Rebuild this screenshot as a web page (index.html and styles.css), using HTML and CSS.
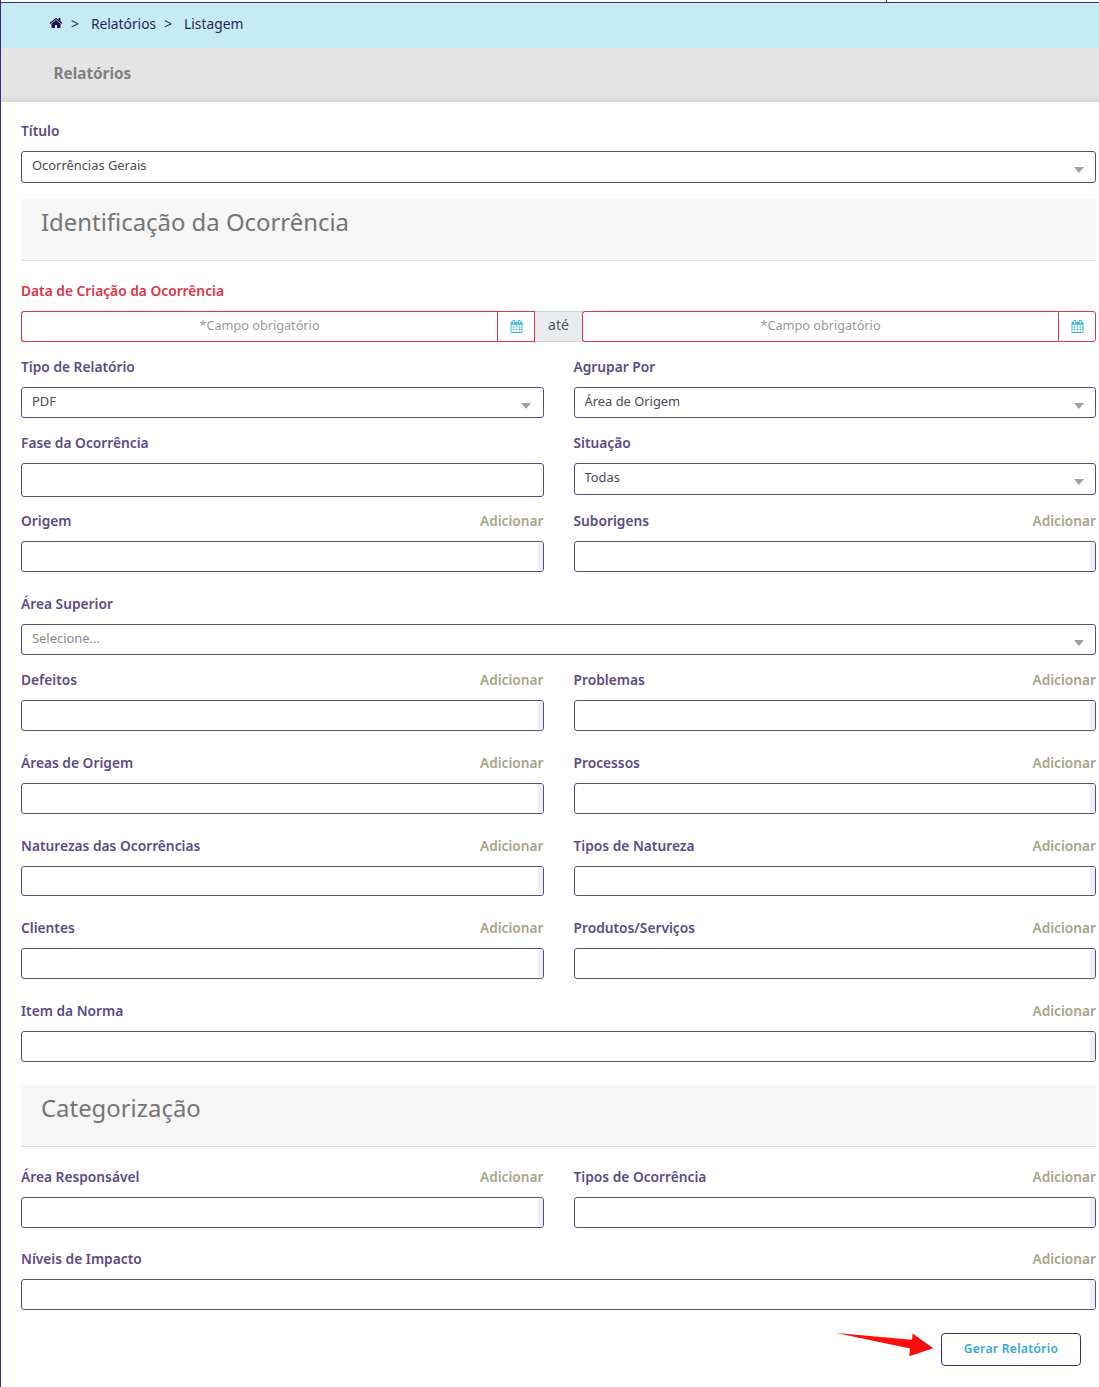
FILE: index.html
```html
<!DOCTYPE html>
<html lang="pt-BR">
<head>
    <meta charset="UTF-8">
    <meta name="viewport" content="width=device-width, initial-scale=1.0">
    <title>Relatórios</title>
    <link rel="stylesheet" href="styles.css">
</head>
<body>
    <div class="page">
        <div class="topbar"><span class="topbar-tick"></span></div>
        <div class="breadcrumb">
            <svg class="home-icon" viewBox="0 0 1792 1792"><path d="M1472 992v480q0 26-19 45t-45 19h-384v-384h-256v384h-384q-26 0-45-19t-19-45v-480q0-1 .5-3t.5-3l575-474 575 474q1 2 1 6zm223-69l-62 74q-8 9-21 11h-3q-13 0-21-7l-692-577-692 577q-12 8-24 7-13-2-21-11l-62-74q-8-10-7-23.500t11-21.500l719-599q32-26 76-26t76 26l244 204v-195q0-14 9-23t23-9h192q14 0 23 9t9 23v408l219 182q10 8 11 21.500t-7 23.500z"/></svg>
            <span class="crumb-sep">&gt;</span>
            <span>Relatórios</span>
            <span class="crumb-sep">&gt;</span>
            <span>Listagem</span>
        </div>
        <div class="page-title">Relatórios</div>

        <form class="content">
            <div class="row">
                <div class="field">
                    <label class="field-label">Título</label>
                    <div class="select-box h32"><select><option>Ocorrências Gerais</option></select></div>
                </div>
            </div>

            <div class="section first"><h3>Identificação da Ocorrência</h3></div>

            <div class="row">
                <div class="field">
                    <label class="field-label required">Data de Criação da Ocorrência</label>
                    <div class="date-range">
                        <input type="text" placeholder="*Campo obrigatório">
                        <span class="date-addon"><svg class="cal-icon" viewBox="0 0 1792 1792"><path d="M192 1664h288v-288h-288v288zm352 0h320v-288h-320v288zm-352-352h288v-320h-288v320zm352 0h320v-320h-320v320zm-352-384h288v-288h-288v288zm736 736h320v-288h-320v288zm-384-736h320v-288h-320v288zm768 736h288v-288h-288v288zm-384-352h320v-320h-320v320zm-352-864v-288q0-13-9.500-22.500t-22.500-9.500h-64q-13 0-22.500 9.500t-9.500 22.500v288q0 13 9.500 22.500t22.500 9.500h64q13 0 22.500-9.500t9.500-22.500zm736 864h288v-320h-288v320zm-384-384h320v-288h-320v288zm384 0h288v-288h-288v288zm32-480v-288q0-13-9.500-22.500t-22.500-9.500h-64q-13 0-22.500 9.500t-9.500 22.500v288q0 13 9.500 22.500t22.500 9.500h64q13 0 22.500-9.500t9.500-22.500zm384-64v1280q0 52-38 90t-90 38h-1408q-52 0-90-38t-38-90v-1280q0-52 38-90t90-38h128v-96q0-66 47-113t113-47h64q66 0 113 47t47 113v96h384v-96q0-66 47-113t113-47h64q66 0 113 47t47 113v96h128q52 0 90 38t38 90z"/></svg></span>
                        <span class="date-sep">até</span>
                        <input type="text" placeholder="*Campo obrigatório">
                        <span class="date-addon"><svg class="cal-icon" viewBox="0 0 1792 1792"><path d="M192 1664h288v-288h-288v288zm352 0h320v-288h-320v288zm-352-352h288v-320h-288v320zm352 0h320v-320h-320v320zm-352-384h288v-288h-288v288zm736 736h320v-288h-320v288zm-384-736h320v-288h-320v288zm768 736h288v-288h-288v288zm-384-352h320v-320h-320v320zm-352-864v-288q0-13-9.500-22.500t-22.500-9.500h-64q-13 0-22.500 9.500t-9.500 22.500v288q0 13 9.500 22.500t22.500 9.500h64q13 0 22.500-9.500t9.500-22.500zm736 864h288v-320h-288v320zm-384-384h320v-288h-320v288zm384 0h288v-288h-288v288zm32-480v-288q0-13-9.500-22.500t-22.500-9.500h-64q-13 0-22.500 9.500t-9.500 22.500v288q0 13 9.500 22.500t22.500 9.500h64q13 0 22.500-9.500t9.500-22.500zm384-64v1280q0 52-38 90t-90 38h-1408q-52 0-90-38t-38-90v-1280q0-52 38-90t90-38h128v-96q0-66 47-113t113-47h64q66 0 113 47t47 113v96h384v-96q0-66 47-113t113-47h64q66 0 113 47t47 113v96h128q52 0 90 38t38 90z"/></svg></span>
                    </div>
                </div>
            </div>

            <div class="row">
                <div class="field">
                    <label class="field-label">Tipo de Relatório</label>
                    <div class="select-box"><select><option>PDF</option></select></div>
                </div>
                <div class="field">
                    <label class="field-label">Agrupar Por</label>
                    <div class="select-box"><select><option>Área de Origem</option></select></div>
                </div>
            </div>

            <div class="row tight">
                <div class="field">
                    <label class="field-label">Fase da Ocorrência</label>
                    <div class="plain-box"></div>
                </div>
                <div class="field">
                    <label class="field-label">Situação</label>
                    <div class="select-box h32"><select><option>Todas</option></select></div>
                </div>
            </div>

            <div class="row spaced">
                <div class="field">
                    <div class="label-line"><label class="field-label">Origem</label><a class="add-link">Adicionar</a></div>
                    <div class="multi-box"><span class="multi-track"></span></div>
                </div>
                <div class="field">
                    <div class="label-line"><label class="field-label">Suborigens</label><a class="add-link">Adicionar</a></div>
                    <div class="multi-box"><span class="multi-track"></span></div>
                </div>
            </div>

            <div class="row">
                <div class="field">
                    <label class="field-label">Área Superior</label>
                    <div class="select-box"><select class="empty"><option>Selecione...</option></select></div>
                </div>
            </div>

            <div class="row spaced">
                <div class="field">
                    <div class="label-line"><label class="field-label">Defeitos</label><a class="add-link">Adicionar</a></div>
                    <div class="multi-box"><span class="multi-track"></span></div>
                </div>
                <div class="field">
                    <div class="label-line"><label class="field-label">Problemas</label><a class="add-link">Adicionar</a></div>
                    <div class="multi-box"><span class="multi-track"></span></div>
                </div>
            </div>

            <div class="row spaced">
                <div class="field">
                    <div class="label-line"><label class="field-label">Áreas de Origem</label><a class="add-link">Adicionar</a></div>
                    <div class="multi-box"><span class="multi-track"></span></div>
                </div>
                <div class="field">
                    <div class="label-line"><label class="field-label">Processos</label><a class="add-link">Adicionar</a></div>
                    <div class="multi-box"><span class="multi-track"></span></div>
                </div>
            </div>

            <div class="row spaced">
                <div class="field">
                    <div class="label-line"><label class="field-label">Naturezas das Ocorrências</label><a class="add-link">Adicionar</a></div>
                    <div class="multi-box h30"><span class="multi-track"></span></div>
                </div>
                <div class="field">
                    <div class="label-line"><label class="field-label">Tipos de Natureza</label><a class="add-link">Adicionar</a></div>
                    <div class="multi-box h30"><span class="multi-track"></span></div>
                </div>
            </div>

            <div class="row spaced">
                <div class="field">
                    <div class="label-line"><label class="field-label">Clientes</label><a class="add-link">Adicionar</a></div>
                    <div class="multi-box"><span class="multi-track"></span></div>
                </div>
                <div class="field">
                    <div class="label-line"><label class="field-label">Produtos/Serviços</label><a class="add-link">Adicionar</a></div>
                    <div class="multi-box"><span class="multi-track"></span></div>
                </div>
            </div>

            <div class="row spaced">
                <div class="field">
                    <div class="label-line"><label class="field-label">Item da Norma</label><a class="add-link">Adicionar</a></div>
                    <div class="multi-box"><span class="multi-track"></span></div>
                </div>
            </div>

            <div class="section"><h3>Categorização</h3></div>

            <div class="row near">
                <div class="field">
                    <div class="label-line"><label class="field-label">Área Responsável</label><a class="add-link">Adicionar</a></div>
                    <div class="multi-box"><span class="multi-track"></span></div>
                </div>
                <div class="field">
                    <div class="label-line"><label class="field-label">Tipos de Ocorrência</label><a class="add-link">Adicionar</a></div>
                    <div class="multi-box"><span class="multi-track"></span></div>
                </div>
            </div>

            <div class="row spaced">
                <div class="field">
                    <div class="label-line"><label class="field-label">Níveis de Impacto</label><a class="add-link">Adicionar</a></div>
                    <div class="multi-box"><span class="multi-track"></span></div>
                </div>
            </div>

            <div class="actions">
                <svg class="arrow" viewBox="0 0 98 24"><polygon points="0,0 76,6.800 76.700,0.600 97.300,15.300 73.300,23.300 74,15.600"/></svg>
                <button type="button" class="btn-generate">Gerar Relatório</button>
            </div>
        </form>
    </div>
</body>
</html>
```

FILE: styles.css
```css
* {
    box-sizing: border-box;
}
body {
    margin: 0;
    font-family: "Noto Sans", "Open Sans", sans-serif;
    background-color: #fff;
}
.page {
    height: 1387px;
    border-left: 1px solid #3b2a7e;
    overflow: hidden;
}
.topbar {
    height: 3px;
    border-bottom: 1px solid #3b2a7e;
    display: flex;
    justify-content: flex-end;
    padding-right: 212px;
}
.topbar-tick {
    width: 1px;
    height: 2px;
    background-color: #3b2a7e;
}
.breadcrumb {
    height: 45px;
    background-color: #c5ebf4;
    color: #2a1f57;
    font-size: 13.800px;
    display: flex;
    align-items: center;
    padding: 0 0 5px 48px;
}
.home-icon {
    width: 14px;
    height: 14px;
    fill: #1f1547;
}
.crumb-sep {
    margin: 0 12px 0 8px;
}
.page-title {
    height: 54px;
    background: linear-gradient(to bottom, #e4e4e4 88%, #d8d8d8 100%);
    color: #808080;
    font-size: 15.300px;
    font-weight: 700;
    line-height: 51px;
    padding-left: 52.500px;
}
.content {
    padding: 19px 3px 0 20px;
}
.row {
    display: flex;
    gap: 30px;
    margin-bottom: 15px;
}
.row.tight {
    margin-bottom: 14px;
}
.row.spaced {
    margin-bottom: 22px;
}
.row.near {
    margin-bottom: 21px;
}
.field {
    flex: 1 1 0;
    min-width: 0;
}
.field-label {
    display: block;
    height: 20px;
    margin-bottom: 10px;
    color: #5c4a87;
    font-size: 13.750px;
    font-weight: 600;
    line-height: 20px;
}
.field-label.required {
    color: #dc3545;
}
.label-line {
    display: flex;
    justify-content: space-between;
}
.add-link {
    color: #a8a488;
    font-size: 13.700px;
    font-weight: 600;
    line-height: 20px;
}
.select-box {
    position: relative;
    height: 31px;
}
.select-box.h32 {
    height: 32px;
}
.select-box select {
    display: block;
    width: 100%;
    height: 100%;
    padding: 0 30px 4px 10px;
    appearance: none;
    background-color: #fff;
    border: 1px solid #5a4a8c;
    border-radius: 3px;
    color: #4a4a55;
    font-family: inherit;
    font-size: 12.900px;
}
.select-box select.empty {
    color: #8a8a8a;
}
.select-box::after {
    content: "";
    position: absolute;
    right: 12.500px;
    top: 16px;
    border-left: 5.500px solid transparent;
    border-right: 5.500px solid transparent;
    border-top: 6px solid #a0a0a0;
}
.plain-box {
    height: 34px;
    border: 1px solid #5a4a8c;
    border-radius: 3px;
}
.multi-box {
    height: 31px;
    display: flex;
    justify-content: flex-end;
    border: 1px solid #5a4a8c;
    border-radius: 3px;
    overflow: hidden;
}
.multi-box.h30 {
    height: 30px;
}
.multi-track {
    width: 5px;
    background-color: #efefef;
}
.date-range {
    display: flex;
    height: 31px;
}
.date-range input {
    flex: 1 1 0;
    min-width: 0;
    border: 1px solid #dc3545;
    border-right: none;
    border-radius: 3px 0 0 3px;
    padding: 0 10px 3px;
    text-align: center;
    font-family: inherit;
    font-size: 12.700px;
}
.date-range input::placeholder {
    color: #999;
}
.date-addon {
    width: 38px;
    display: flex;
    align-items: center;
    justify-content: center;
    border: 1px solid #dc3545;
}
.date-addon:last-child {
    border-radius: 0 3px 3px 0;
}
.cal-icon {
    width: 13px;
    height: 13px;
    fill: #45b4dc;
}
.date-sep {
    width: 47px;
    background-color: #e9ecef;
    border-top: 1px solid #ced4da;
    border-bottom: 1px solid #ced4da;
    color: #555;
    font-size: 14px;
    line-height: 25px;
    text-align: center;
}
.section {
    height: 62px;
    margin: 23px 0 20px;
    padding: 5px 20px 0;
    background-color: #f6f6f6;
    border-bottom: 1px solid #dcdcdc;
}
.section.first {
    margin-top: 16px;
}
.section h3 {
    margin: 0;
    color: #757575;
    font-size: 23.900px;
    font-weight: 400;
    line-height: 36px;
}
.actions {
    display: flex;
    justify-content: flex-end;
    align-items: flex-start;
    padding: 1px 15px 0 0;
}
.arrow {
    width: 98px;
    height: 24px;
    margin-right: 7px;
    fill: #fb0d0d;
}
.btn-generate {
    width: 140px;
    height: 33px;
    padding-bottom: 3px;
    background-color: #fff;
    border: 1px solid #3b2a7e;
    border-radius: 4px;
    color: #2ea6d6;
    font-family: inherit;
    font-size: 12px;
    font-weight: 600;
    letter-spacing: 0.35px;
}
```
